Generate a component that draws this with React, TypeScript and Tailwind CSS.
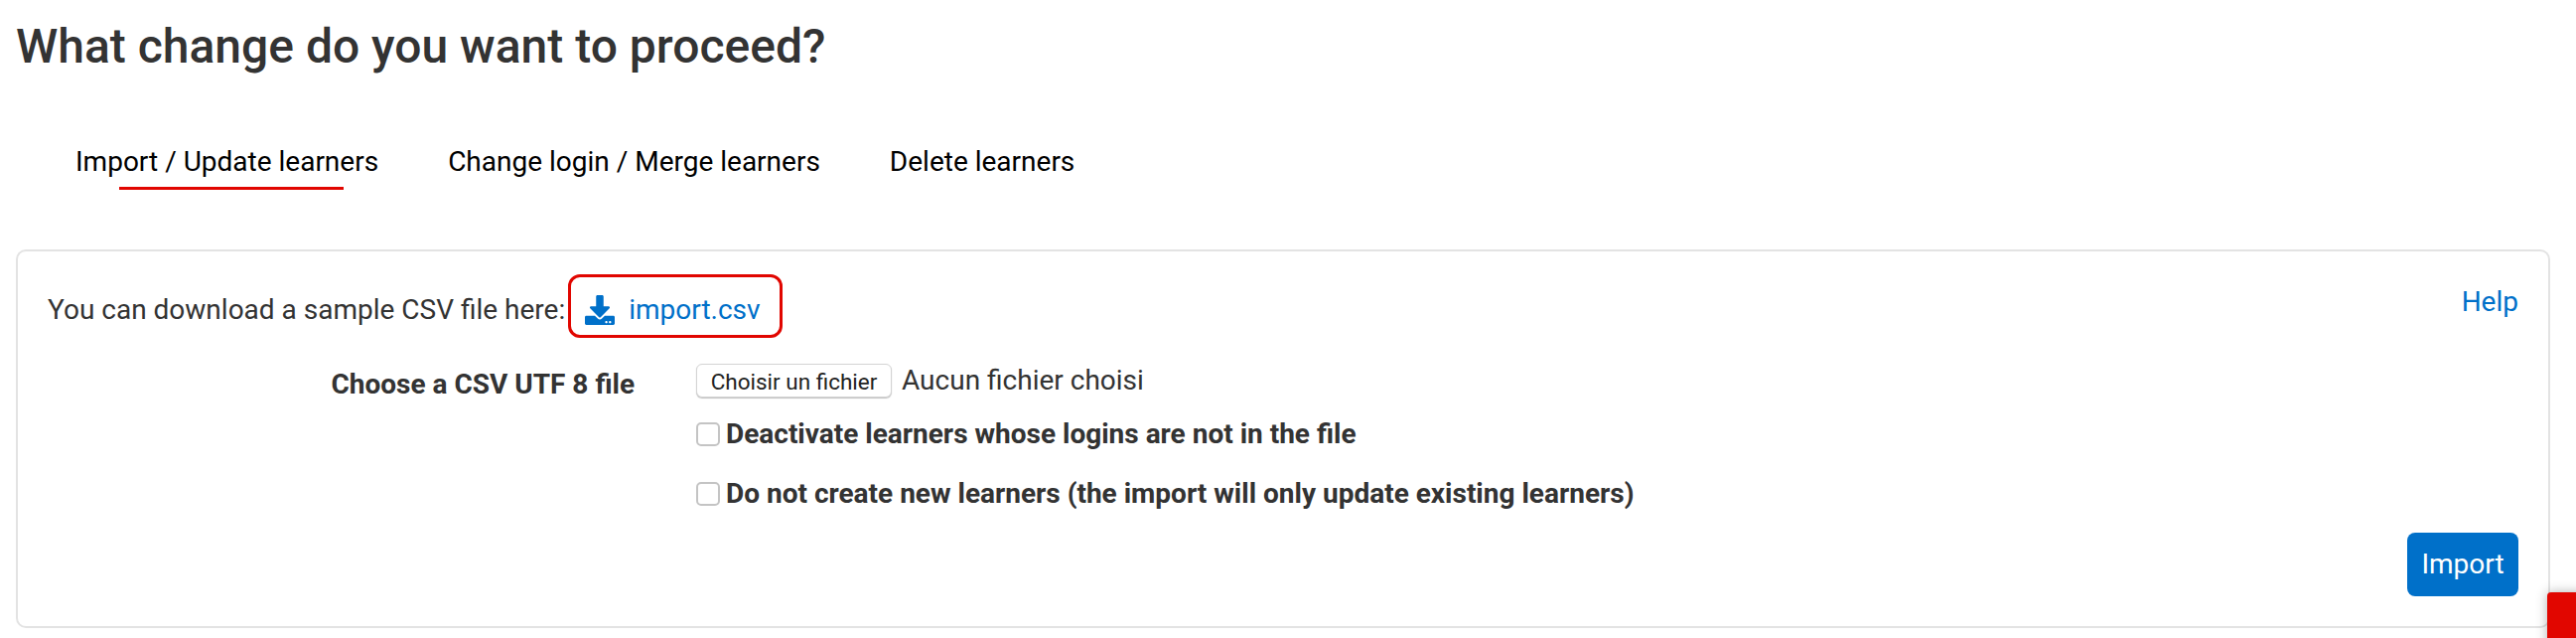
import { FaDownload } from "react-icons/fa";

function Tab({ label, active, ml }: { label: string; active?: boolean; ml?: string }) {
  return (
    <div className={`relative ${ml ?? ""}`}>
      <a className="block text-[28px] leading-[40px] text-black">{label}</a>
      {active && <div className="absolute left-[44px] top-[45px] h-[3px] w-[226px] bg-[#e10600]" />}
    </div>
  );
}

function Check({ label, className }: { label: string; className: string }) {
  return (
    <label className={`flex items-center ${className}`}>
      <input
        type="checkbox"
        className="h-[24px] w-[24px] appearance-none rounded-[5px] border-2 border-[#c4c4c4] bg-white"
      />
      <span className="ml-[6px] text-[28px] font-bold leading-[40px] text-[#333]">{label}</span>
    </label>
  );
}

export default function App() {
  return (
    <div className="relative h-[642px] w-full overflow-hidden bg-white font-['Roboto',sans-serif] text-[#333]">
      <h1 className="pl-[16px] pt-[19px] text-[48px] font-medium leading-[56px] text-[#333]">
        What change do you want to proceed?
      </h1>
      <nav className="mt-[68px] flex pl-[76px]">
        <Tab label="Import / Update learners" active />
        <Tab label="Change login / Merge learners" ml="ml-[70px]" />
        <Tab label="Delete learners" ml="ml-[70px]" />
      </nav>
      <section className="relative mx-[16px] mt-[68px] h-[381px] w-[2552px] rounded-[10px] border-2 border-[#e3e3e3] bg-white pl-[30px] pr-[30px]">
        <div className="flex items-start justify-between pt-[23px]">
          <div className="flex items-center">
            <span className="translate-y-[4px] text-[28px] leading-[40px]">You can download a sample CSV file here:</span>
            <a className="ml-[3px] flex h-[64px] w-[216px] items-center rounded-[12px] border-[3px] border-[#e10600] pl-[14px] pt-[8px] text-[#0070c9]">
              <FaDownload className="h-[30px] w-[30px] text-[#0070c9]" />
              <span className="ml-[14px] text-[28px] leading-[40px]">import.csv</span>
            </a>
          </div>
          <a className="pt-[8px] text-[28px] leading-[40px] text-[#0070c9]">Help</a>
        </div>
        <div className="mt-[26px] flex items-start">
          <div className="w-[653px] pr-[62px] pt-[1px] text-right">
            <span className="text-[28px] font-bold leading-[40px]">Choose a CSV UTF 8 file</span>
          </div>
          <div className="flex-1">
            <div className="flex items-center">
              <button className="h-[34px] w-[197px] rounded-[6px] border border-[#d4d4d4] bg-white pt-[2px] text-[22.5px] leading-[28px] text-[#222] shadow-[0_1px_1px_rgba(0,0,0,0.25)]">
                Choisir un fichier
              </button>
              <span className="ml-[10px] text-[28px] leading-[34px]">Aucun fichier choisi</span>
            </div>
            <Check label="Deactivate learners whose logins are not in the file" className="mt-[17px]" />
            <Check label="Do not create new learners (the import will only update existing learners)" className="mt-[20px]" />
            <div className="mt-[19px] flex justify-end">
              <button className="h-[64px] w-[112px] rounded-[8px] bg-[#0070c9] text-[28px] text-white">
                Import
              </button>
            </div>
          </div>
        </div>
      </section>
      <div className="absolute left-[2565px] top-[596px] h-[60px] w-[40px] rounded-tl-[4px] bg-[#e10600] shadow-[0_0_12px_rgba(0,0,0,0.3)]" />
    </div>
  );
}
